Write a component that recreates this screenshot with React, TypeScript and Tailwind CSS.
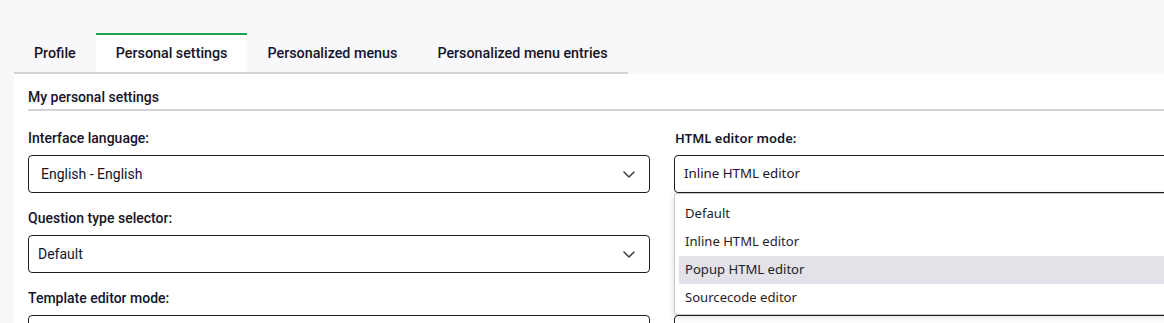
const tabs = ['Profile', 'Personal settings', 'Personalized menus', 'Personalized menu entries'];

function Chevron() {
  return (
    <svg width="12" height="7" viewBox="0 0 12 7" fill="none" className="shrink-0">
      <polyline points="1 1 6 6 11 1" stroke="#3c3c46" strokeWidth="1.5" strokeLinecap="round" strokeLinejoin="round" />
    </svg>
  );
}

function Field({ label, value, textPad = 'pl-[12px]' }: { label: string; value: string; textPad?: string }) {
  return (
    <div className="flex flex-col">
      <label className="h-5 leading-5 text-[14px] font-medium text-[#14142b] mb-[7px]">{label}</label>
      <div className={`h-[38px] border border-[#1e1e28] rounded-[4px] flex items-center justify-between ${textPad} pr-[14px] text-[14px] text-[#14142b]`}>
        <span>{value}</span>
        <Chevron />
      </div>
    </div>
  );
}

export default function App() {
  const options = ['Default', 'Inline HTML editor', 'Popup HTML editor', 'Sourcecode editor'];

  return (
    <div className="w-[1164px] h-[323px] overflow-hidden bg-[#f8f8fa] font-['Roboto',sans-serif] text-[#14142b]">
      {/* Tabs */}
      <div className="pt-[33px] pl-[14px]">
        <div className="flex w-fit border-b-2 border-[#d2d2d8]">
          {tabs.map((t) => {
            const active = t === 'Personal settings';
            return (
              <div
                key={t}
                className={
                  active
                    ? 'h-[39px] px-5 -mb-[2px] flex items-center border-t-2 border-[#1aa453] bg-white text-[14.3px] font-medium'
                    : 'h-[37px] px-5 mt-[2px] flex items-center text-[14.3px] font-medium'
                }
              >
                {t}
              </div>
            );
          })}
        </div>
      </div>

      {/* Panel */}
      <div className="ml-[14px] bg-white pl-[14px] pt-[13px] h-full">
        <div className="h-5 leading-5 text-[14px] font-medium pb-[2px] border-b-2 border-[#d2d2d8] box-content">
          My personal settings
        </div>
        <div className="grid grid-cols-[622px_622px] gap-x-6 gap-y-[15px] mt-[17px]">
          <Field label="Interface language:" value="English - English" />
          <div className="flex flex-col font-['Noto_Sans',sans-serif]">
            <label className="h-5 leading-5 text-[13px] font-semibold text-[#14142b] mb-[7px] pl-px">HTML editor mode:</label>
            <div className="relative">
              <div className="h-[38px] border border-[#1e1e28] rounded-[4px] flex items-center pl-[9px] text-[13.3px] text-[#14142b]">
                Inline HTML editor
              </div>
              <div className="absolute z-10 left-0 top-[38px] w-[622px] h-[122px] bg-white border border-[#c8c8cc] rounded-[3px] shadow-[0_2px_6px_rgba(0,0,0,0.15)] pt-[6px] px-[4px]">
                {options.map((o) => (
                  <div
                    key={o}
                    className={`h-[28px] flex items-center pl-[6px] text-[13.1px] text-[#1e1e28] rounded-[2px] ${o === 'Popup HTML editor' ? 'bg-[#e2e2e8]' : ''}`}
                  >
                    {o}
                  </div>
                ))}
              </div>
            </div>
          </div>
          <Field label="Question type selector:" value="Default" textPad="pl-[9px]" />
          <Field label="" value="" />
          <Field label="Template editor mode:" value="" />
          <Field label="" value="" />
        </div>
      </div>
    </div>
  );
}
